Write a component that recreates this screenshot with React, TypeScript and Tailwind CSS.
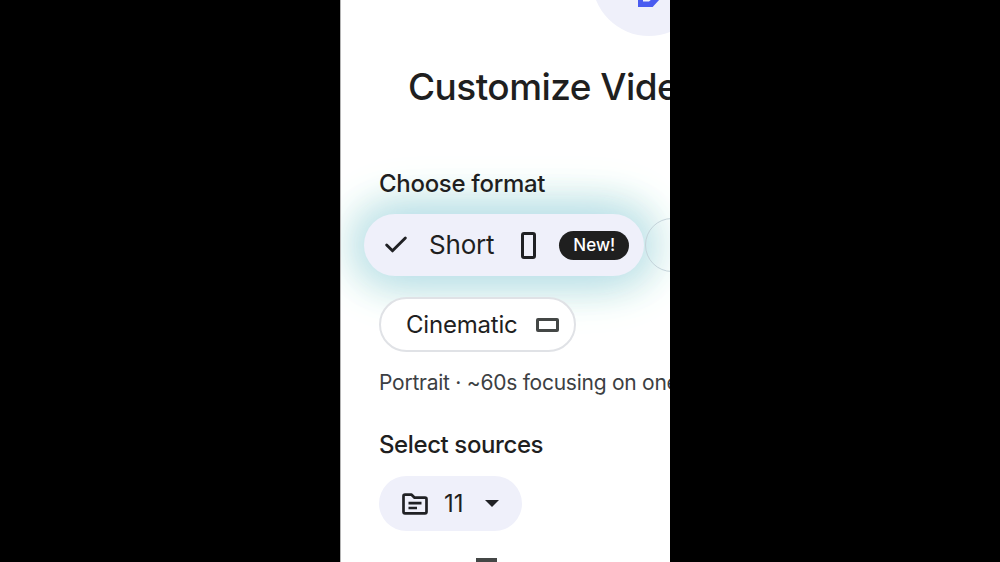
import { Check } from "lucide-react";

const font = "font-['Inter','Noto_Sans',sans-serif]";

function FolderIcon() {
  return (
    <svg width="28" height="24" viewBox="0 0 28 24" fill="none" stroke="#202124" strokeWidth="2.7">
      <path d="M2.500 4.200c0-.9.6-1.500 1.500-1.500h6.600l3 3h10.400c.9 0 1.500.6 1.500 1.500v12.600c0 .9-.6 1.500-1.500 1.500H4c-.9 0-1.500-.6-1.500-1.500z" strokeLinejoin="round" />
      <path d="M7.500 11.200h13M7.500 16h8.500" />
    </svg>
  );
}

export default function App() {
  return (
    <div className={`flex h-[562px] w-[1000px] overflow-hidden bg-black ${font}`}>
      <main className="ml-[340px] h-full w-[330px] overflow-hidden border-l border-[#b5b5b5] bg-white text-[#1f1f1f]">
        <div className="-mt-[78px] ml-[251px] flex h-[114px] w-[114px] shrink-0 items-end rounded-full bg-[#eff0fa] pb-[29px] pl-[46px]">
          <svg width="23" height="8" viewBox="0 0 23 8" fill="#4a5cf0">
            <path d="M0 0h5v2.500h6L14 0h8l-6 6.500-1.300 1.500H0z" />
          </svg>
        </div>

        <h1 className="mt-[28px] ml-[67px] whitespace-nowrap text-[37px] leading-[46px] font-medium tracking-[-0.55px]">
          Customize Video
        </h1>

        <h2 className="relative z-10 mt-[59px] ml-[38px] text-[24px] leading-[30px] font-medium tracking-[-0.3px]">Choose format</h2>

        <div className="mt-[15px] ml-[23px] flex w-[400px] items-center">
          <div className="flex h-[62px] w-[280px] shrink-0 items-center rounded-full bg-[#eff0fa] pl-[18px] shadow-[-8px_0_44px_0_#b9dfea,8px_0_44px_0_#b9dfea,0_0_52px_12px_#e2f5e9]">
            <Check size={28} strokeWidth={2.5} className="text-[#202124]" />
            <span className="ml-[19px] pb-[2px] text-[26px] tracking-[-0.2px]">Short</span>
            <span className="ml-[27px] h-[27px] w-[15px] rounded-[3px] border-[3px] border-[#202124]" />
            <span className="ml-[23px] rounded-full bg-[#1f1f1f] px-[14px] py-[3px] text-[17px] leading-[23px] font-medium text-white">New!</span>
          </div>
          <div className="ml-[1px] h-[54px] w-[120px] shrink-0 rounded-full border border-[#c4d3da]" />
        </div>

        <div className="relative z-10 mt-[21px] ml-[38px] flex h-[55px] w-[197px] items-center rounded-full border-2 border-[#e0e2e6] bg-white pl-[25px]">
          <span className="text-[24px] tracking-[-0.2px]">Cinematic</span>
          <span className="ml-[18px] h-[14px] w-[23px] rounded-[2px] border-[3px] border-[#444746]" />
        </div>

        <p className="mt-[17px] ml-[38px] text-[21px] leading-[28px] tracking-[-0.25px] whitespace-nowrap text-[#3c4043]">
          Portrait · ~60s focusing on one topic
        </p>

        <h2 className="mt-[33px] ml-[38px] text-[24px] leading-[30px] font-medium tracking-[-0.4px]">Select sources</h2>

        <div className="mt-[16px] ml-[38px] flex h-[55px] w-[143px] items-center rounded-full bg-[#eff0fa] pl-[22px]">
          <FolderIcon />
          <span className="ml-[15px] text-[24px]">11</span>
          <span className="ml-[21px] h-0 w-0 border-x-[7px] border-t-[7px] border-x-transparent border-t-[#202124]" />
        </div>

        <div className="mt-[27px] ml-[135px] h-[10px] w-[21px] bg-[#444746]" />
      </main>
    </div>
  );
}
